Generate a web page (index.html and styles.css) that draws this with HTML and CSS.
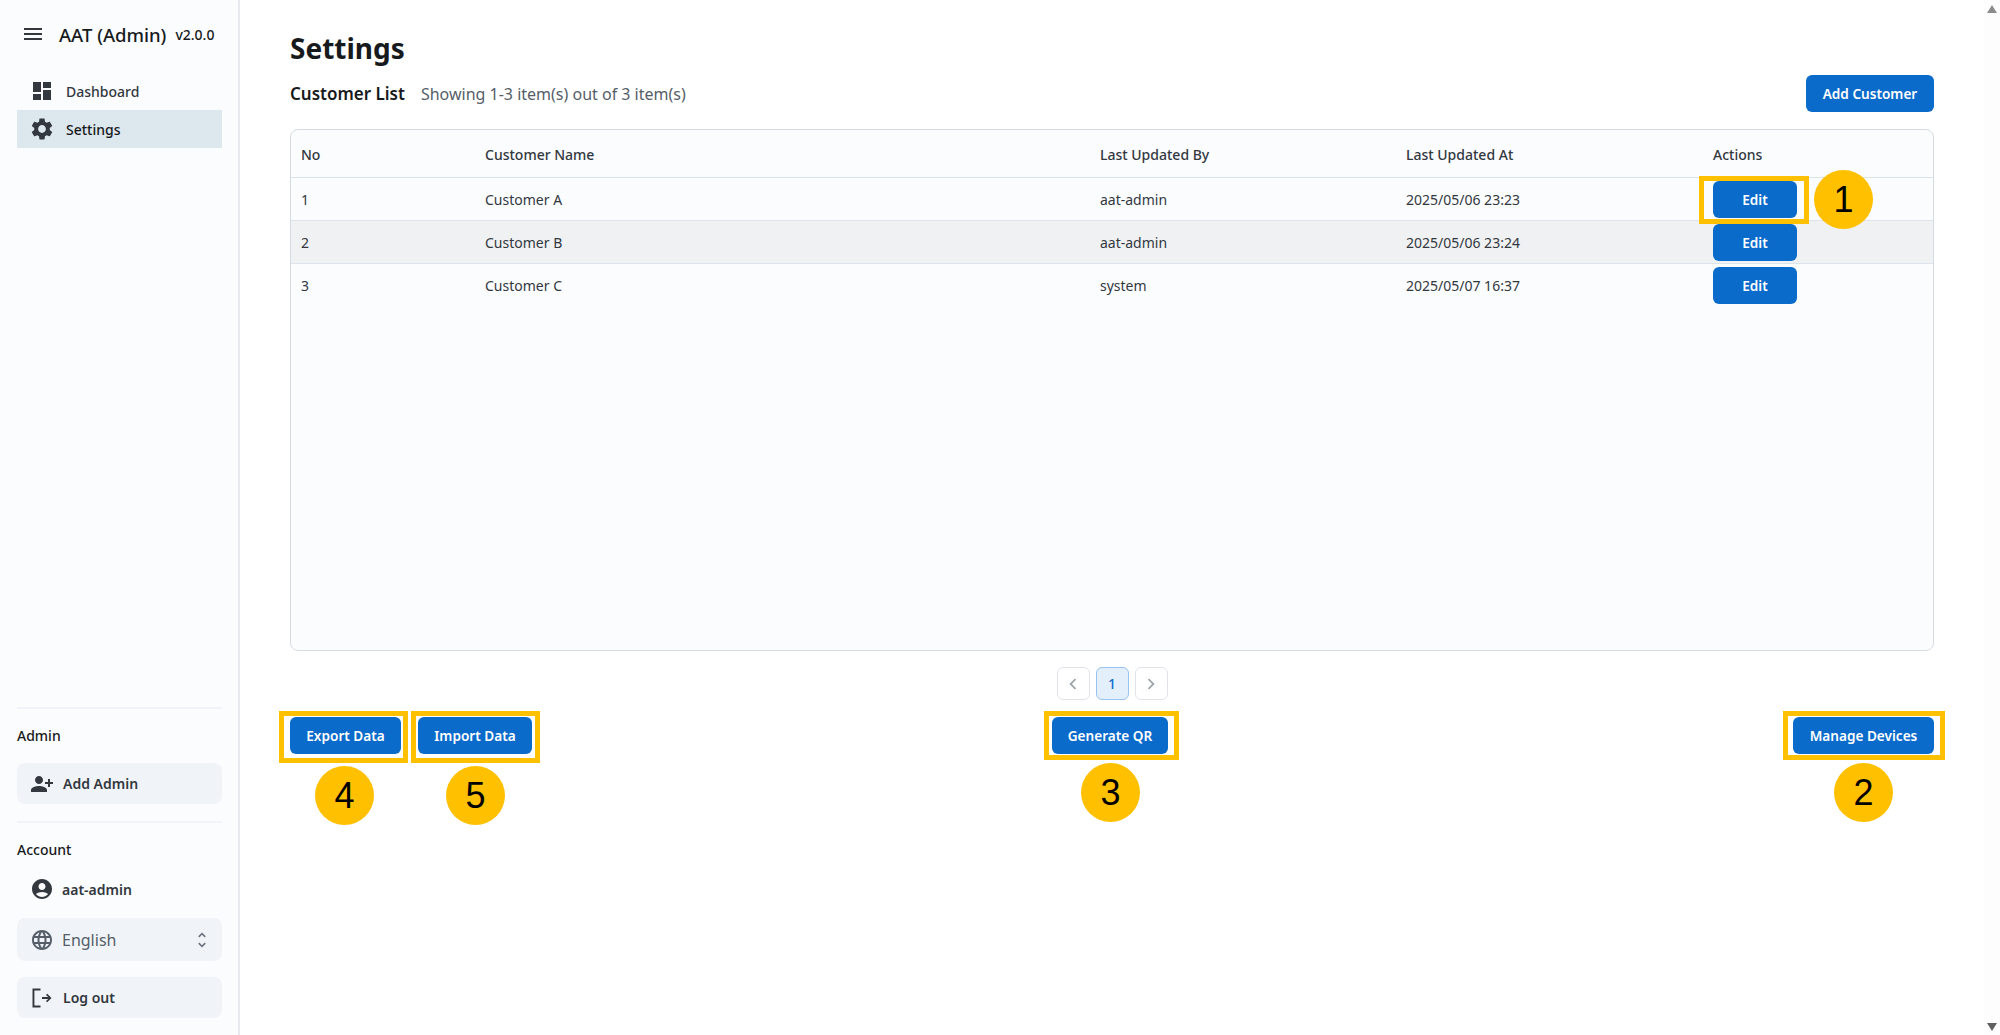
FILE: index.html
```html
<!DOCTYPE html>
<html lang="en">

<head>
   <meta charset="UTF-8">
   <meta name="viewport" content="width=device-width, initial-scale=1.0">
   <title>AAT (Admin) - Settings</title>
   <link rel="stylesheet" href="styles.css">
</head>

<body>
   <aside class="sidebar">
      <div class="brand">
         <svg class="menu-icon" viewBox="0 0 24 24"><path d="M3 18h18v-2H3zm0-5h18v-2H3zm0-7v2h18V6z" /></svg>
         <span class="brand-name">AAT (Admin)</span>
         <span class="brand-version">v2.0.0</span>
      </div>
      <nav class="nav">
         <a class="nav-item">
            <svg class="icon" viewBox="0 0 24 24"><path d="M3 13h8V3H3zm0 8h8v-6H3zm10 0h8V11h-8zm0-18v6h8V3z" /></svg>
            Dashboard
         </a>
         <a class="nav-item nav-item-active">
            <svg class="icon icon-gear" viewBox="0 0 24 24"><path d="M19.14 12.94c.04-.3.06-.61.06-.94 0-.32-.02-.64-.07-.94l2.03-1.58c.18-.14.23-.41.12-.61l-1.92-3.32c-.12-.22-.37-.29-.59-.22l-2.39.96c-.5-.38-1.03-.7-1.62-.94l-.36-2.54c-.04-.24-.24-.41-.48-.41h-3.84c-.24 0-.43.17-.47.41l-.36 2.54c-.59.24-1.13.57-1.62.94l-2.39-.96c-.22-.08-.47 0-.59.22L2.74 8.87c-.12.21-.08.47.12.61l2.03 1.58c-.05.3-.09.63-.09.94s.02.64.07.94l-2.03 1.58c-.18.14-.23.41-.12.61l1.92 3.32c.12.22.37.29.59.22l2.39-.96c.5.38 1.03.7 1.62.94l.36 2.54c.05.24.24.41.48.41h3.84c.24 0 .44-.17.47-.41l.36-2.54c.59-.24 1.13-.56 1.62-.94l2.39.96c.22.08.47 0 .59-.22l1.92-3.32c.12-.22.07-.47-.12-.61zM12 15.6c-1.98 0-3.6-1.62-3.6-3.6s1.62-3.6 3.6-3.6 3.6 1.62 3.6 3.6-1.62 3.6-3.6 3.6" /></svg>
            Settings
         </a>
      </nav>
      <div class="sidebar-bottom">
         <div class="side-section">
            <p class="side-label">Admin</p>
            <button class="side-button side-button-add">
               <svg class="icon" viewBox="0 0 24 24"><path d="M15 12c2.21 0 4-1.79 4-4s-1.79-4-4-4-4 1.79-4 4 1.79 4 4 4m-9-2V7H4v3H1v2h3v3h2v-3h3v-2zm9 4c-2.67 0-8 1.34-8 4v2h16v-2c0-2.66-5.33-4-8-4" transform="matrix(-1 0 0 1 24 0)" /></svg>
               Add Admin
            </button>
         </div>
         <div class="side-section">
            <p class="side-label">Account</p>
            <div class="user-row">
               <svg class="icon" viewBox="0 0 24 24"><path d="M12 2C6.48 2 2 6.48 2 12s4.48 10 10 10 10-4.48 10-10S17.52 2 12 2m0 4c1.93 0 3.5 1.57 3.5 3.5S13.93 13 12 13s-3.5-1.57-3.5-3.5S10.07 6 12 6m0 14c-2.03 0-4.43-.82-6.14-2.88C7.55 15.8 9.68 15 12 15s4.45.8 6.14 2.12C16.43 19.18 14.03 20 12 20" /></svg>
               aat-admin
            </div>
            <div class="lang-select">
               <svg class="icon icon-muted" viewBox="0 0 24 24"><path d="M11.99 2C6.47 2 2 6.48 2 12s4.47 10 9.99 10C17.52 22 22 17.52 22 12S17.52 2 11.99 2m6.93 6h-2.95c-.32-1.25-.78-2.45-1.38-3.56 1.84.63 3.37 1.91 4.33 3.56M12 4.04c.83 1.2 1.48 2.53 1.91 3.96h-3.82c.43-1.43 1.08-2.76 1.91-3.96M4.26 14C4.1 13.36 4 12.69 4 12s.1-1.36.26-2h3.38c-.08.66-.14 1.32-.14 2s.06 1.34.14 2zm.82 2h2.95c.32 1.25.78 2.45 1.38 3.56-1.84-.63-3.37-1.9-4.33-3.56m2.95-8H5.08c.96-1.66 2.49-2.93 4.33-3.56C8.81 5.55 8.35 6.75 8.03 8M12 19.96c-.83-1.2-1.48-2.53-1.91-3.96h3.82c-.43 1.43-1.08 2.76-1.91 3.96M14.34 14H9.66c-.09-.66-.16-1.32-.16-2s.07-1.35.16-2h4.68c.09.65.16 1.32.16 2s-.07 1.34-.16 2m.25 5.56c.6-1.11 1.06-2.31 1.38-3.56h2.95c-.96 1.65-2.49 2.93-4.33 3.56M16.36 14c.08-.66.14-1.32.14-2s-.06-1.34-.14-2h3.38c.16.64.26 1.31.26 2s-.1 1.36-.26 2z" /></svg>
               <span class="lang-value">English</span>
               <svg class="chevrons" viewBox="0 0 24 24"><path d="M12 5.83 15.17 9l1.41-1.41L12 3 7.41 7.59 8.83 9zm0 12.34L8.83 15l-1.41 1.41L12 21l4.59-4.59L15.17 15z" /></svg>
            </div>
            <button class="side-button">
               <svg class="icon" viewBox="0 0 24 24"><path d="M2.500 2.500h8v1.900H4.400v15.200h6.100v1.900h-8zM12 11.100h6.200L16 8.900l1.200-1.200 4.300 4.300-4.300 4.300-1.200-1.200 2.200-2.200H12z" /></svg>
               Log out
            </button>
         </div>
      </div>
   </aside>

   <main class="main">
      <h1 class="page-title">Settings</h1>
      <div class="list-head">
         <h2 class="list-title">Customer List</h2>
         <span class="list-count">Showing 1-3 item(s) out of 3 item(s)</span>
         <button class="btn btn-push">Add Customer</button>
      </div>

      <div class="table-wrap">
         <table class="table">
            <thead>
               <tr>
                  <th class="col-no">No</th>
                  <th class="col-name">Customer Name</th>
                  <th class="col-by">Last Updated By</th>
                  <th class="col-at">Last Updated At</th>
                  <th>Actions</th>
               </tr>
            </thead>
            <tbody>
               <tr>
                  <td>1</td>
                  <td>Customer A</td>
                  <td>aat-admin</td>
                  <td>2025/05/06 23:23</td>
                  <td><button class="btn btn-edit">Edit</button></td>
               </tr>
               <tr class="row-hover">
                  <td>2</td>
                  <td>Customer B</td>
                  <td>aat-admin</td>
                  <td>2025/05/06 23:24</td>
                  <td><button class="btn btn-edit">Edit</button></td>
               </tr>
               <tr>
                  <td>3</td>
                  <td>Customer C</td>
                  <td>system</td>
                  <td>2025/05/07 16:37</td>
                  <td><button class="btn btn-edit">Edit</button></td>
               </tr>
            </tbody>
         </table>
      </div>

      <div class="pager">
         <span class="page-btn page-arrow">
            <svg viewBox="0 0 24 24"><path d="M15.41 7.41 14 6l-6 6 6 6 1.410-1.410L10.830 12z" /></svg>
         </span>
         <span class="page-btn page-current">1</span>
         <span class="page-btn page-arrow">
            <svg viewBox="0 0 24 24"><path d="M10 6 8.590 7.410 13.170 12l-4.580 4.590L10 18l6-6z" /></svg>
         </span>
      </div>

      <div class="actions">
         <div class="actions-left">
            <button class="btn btn-export">Export Data</button>
            <button class="btn btn-import">Import Data</button>
         </div>
         <button class="btn btn-qr">Generate QR</button>
         <button class="btn btn-devices">Manage Devices</button>
      </div>
   </main>

   <div class="scrollbar">
      <span class="arrow-up"></span>
      <span class="arrow-down"></span>
   </div>

   <!-- callouts drawn on top of the screenshot -->
   <div class="mark mark-edit"></div>
   <div class="mark mark-export"></div>
   <div class="mark mark-import"></div>
   <div class="mark mark-qr"></div>
   <div class="mark mark-devices"></div>
   <div class="bubble bubble-1">1</div>
   <div class="bubble bubble-2">2</div>
   <div class="bubble bubble-3">3</div>
   <div class="bubble bubble-4">4</div>
   <div class="bubble bubble-5">5</div>
</body>

</html>
```

FILE: styles.css
```css
* {
   box-sizing: border-box;
}

html,
body {
   height: 100%;
   margin: 0;
   overflow: hidden;
}

body {
   background-color: #fff;
   color: #171a1c;
   display: flex;
   font-family: 'Noto Sans', 'Open Sans', sans-serif;
   font-size: 14px;
   position: relative;
}

p,
h1,
h2 {
   margin: 0;
}

button {
   border: 0;
   cursor: pointer;
   font-family: inherit;
}

.icon {
   fill: #32383e;
   flex: none;
   height: 24px;
   width: 24px;
}

.icon-muted {
   fill: #555e68;
}

.icon-gear {
   height: 26px;
   margin: 0 -1px;
   width: 26px;
}

/* sidebar */
.sidebar {
   background-color: #fbfcfe;
   border-right: 2px solid #e6eaee;
   display: flex;
   flex: none;
   flex-direction: column;
   padding: 0 16px 17px 17px;
   width: 240px;
}

.brand {
   align-items: center;
   display: flex;
   height: 68px;
   padding-left: 4px;
}

.menu-icon {
   fill: #32383e;
   flex: none;
   height: 24px;
   margin-right: 14px;
   width: 24px;
}

.brand-name {
   font-size: 18.5px;
   font-weight: 500;
   white-space: nowrap;
}

.brand-version {
   font-size: 14px;
   font-weight: 500;
   margin-left: 9px;
}

.nav {
   display: flex;
   flex-direction: column;
   margin-top: 4px;
}

.nav-item {
   align-items: center;
   color: #32383e;
   display: flex;
   font-size: 14px;
   font-weight: 500;
   gap: 12px;
   height: 38px;
   padding-left: 13px;
}

.nav-item-active {
   background-color: #dde7ee;
   color: #171a1c;
}

.sidebar-bottom {
   margin-top: auto;
}

.side-section {
   border-top: 2px solid #f0f4f8;
   padding-top: 17px;
}

.side-section + .side-section {
   margin-top: 17px;
}

.side-label {
   font-size: 14px;
   font-weight: 500;
   line-height: 20px;
}

.side-button {
   align-items: center;
   background-color: #f0f4f8;
   border-radius: 8px;
   color: #32383e;
   display: flex;
   font-size: 14px;
   font-weight: 600;
   gap: 9px;
   height: 41px;
   padding-left: 13px;
   width: 100%;
}

.side-button-add {
   margin-top: 17px;
}

.user-row {
   align-items: center;
   color: #32383e;
   display: flex;
   font-size: 14px;
   font-weight: 600;
   gap: 8px;
   height: 38px;
   margin-top: 10px;
   padding-left: 13px;
}

.lang-select {
   align-items: center;
   background-color: #f0f4f8;
   border-radius: 8px;
   color: #555e68;
   display: flex;
   font-size: 16px;
   gap: 8px;
   height: 43px;
   margin: 10px 0 16px;
   padding: 0 10px 0 13px;
}

.lang-value {
   flex: 1;
}

.chevrons {
   fill: #6b7480;
   height: 20px;
   width: 20px;
}

/* main area */
.main {
   display: flex;
   flex: 1;
   flex-direction: column;
   min-width: 0;
   padding: 0 50px;
}

.page-title {
   font-size: 28px;
   font-weight: 700;
   line-height: 40px;
   margin-top: 28px;
}

.list-head {
   align-items: center;
   display: flex;
   height: 37px;
   margin-top: 7px;
}

.list-title {
   font-size: 17px;
   font-weight: 600;
}

.list-count {
   color: #555e68;
   font-size: 16px;
   margin-left: 16px;
}

.btn {
   background-color: #0b6bcb;
   border-radius: 6px;
   color: #fff;
   font-size: 13.6px;
   font-weight: 600;
   height: 37px;
}

.btn-push {
   margin-left: auto;
   width: 128px;
}

.table-wrap {
   background-color: #fbfcfe;
   border: 1px solid #d5dbe3;
   border-radius: 8px;
   height: 522px;
   margin-top: 17px;
   overflow: hidden;
}

.table {
   border-collapse: collapse;
   table-layout: fixed;
   width: 100%;
}

.table th,
.table td {
   border-bottom: 1px solid #dde3ea;
   color: #32383e;
   font-size: 14px;
   padding: 2px 0 0 10px;
   text-align: left;
}

.table tbody tr:last-child td {
   border-bottom: 0;
}

.table th {
   font-weight: 500;
   height: 47px;
}

.table td {
   height: 43px;
}

.col-no {
   width: 184px;
}

.col-name {
   width: 615px;
}

.col-by {
   width: 306px;
}

.col-at {
   width: 307px;
}

.row-hover td {
   background-color: #f0f1f3;
}

.btn-edit {
   display: block;
   width: 84px;
}

.pager {
   display: flex;
   gap: 6px;
   justify-content: center;
   margin-top: 16px;
}

.page-btn {
   align-items: center;
   border: 1px solid #e0e4e9;
   border-radius: 6px;
   display: flex;
   font-size: 14px;
   font-weight: 500;
   height: 33px;
   justify-content: center;
   width: 33px;
}

.page-arrow svg {
   fill: #9fa6ad;
   height: 22px;
   width: 22px;
}

.page-current {
   background-color: #e3effb;
   border-color: #97c3f0;
   color: #0b6bcb;
}

.actions {
   align-items: flex-start;
   display: grid;
   grid-template-columns: 762px auto 1fr;
   margin-top: 17px;
}

.actions-left {
   display: flex;
   gap: 17px;
}

.btn-export {
   width: 111px;
}

.btn-import {
   width: 114px;
}

.btn-qr {
   width: 116px;
}

.btn-devices {
   justify-self: end;
   width: 141px;
}

/* fake window scrollbar */
.scrollbar {
   background-color: #fdfdfd;
   display: flex;
   flex: none;
   flex-direction: column;
   justify-content: space-between;
   padding: 5px 0 4px;
   width: 16px;
}

.arrow-up,
.arrow-down {
   align-self: center;
   border-left: 5px solid transparent;
   border-right: 5px solid transparent;
   height: 0;
   width: 0;
}

.arrow-up {
   border-bottom: 8px solid #8c8c8c;
}

.arrow-down {
   border-top: 8px solid #606060;
}

/* callouts */
.mark {
   border: 5px solid #ffc000;
   position: absolute;
}

.mark-edit {
   height: 48px;
   left: 1699px;
   top: 176px;
   width: 110px;
}

.mark-export {
   height: 52px;
   left: 279px;
   top: 711px;
   width: 129px;
}

.mark-import {
   height: 52px;
   left: 411px;
   top: 711px;
   width: 129px;
}

.mark-qr {
   height: 49px;
   left: 1044px;
   top: 711px;
   width: 135px;
}

.mark-devices {
   height: 49px;
   left: 1783px;
   top: 711px;
   width: 162px;
}

.bubble {
   align-items: center;
   background-color: #ffc000;
   border-radius: 50%;
   color: #000;
   display: flex;
   font-family: 'Liberation Sans', Arial, sans-serif;
   font-size: 36px;
   height: 59px;
   justify-content: center;
   position: absolute;
   width: 59px;
}

.bubble-1 {
   left: 1814px;
   top: 170px;
}

.bubble-2 {
   left: 1834px;
   top: 763px;
}

.bubble-3 {
   left: 1081px;
   top: 763px;
}

.bubble-4 {
   left: 315px;
   top: 766px;
}

.bubble-5 {
   left: 446px;
   top: 766px;
}
```
